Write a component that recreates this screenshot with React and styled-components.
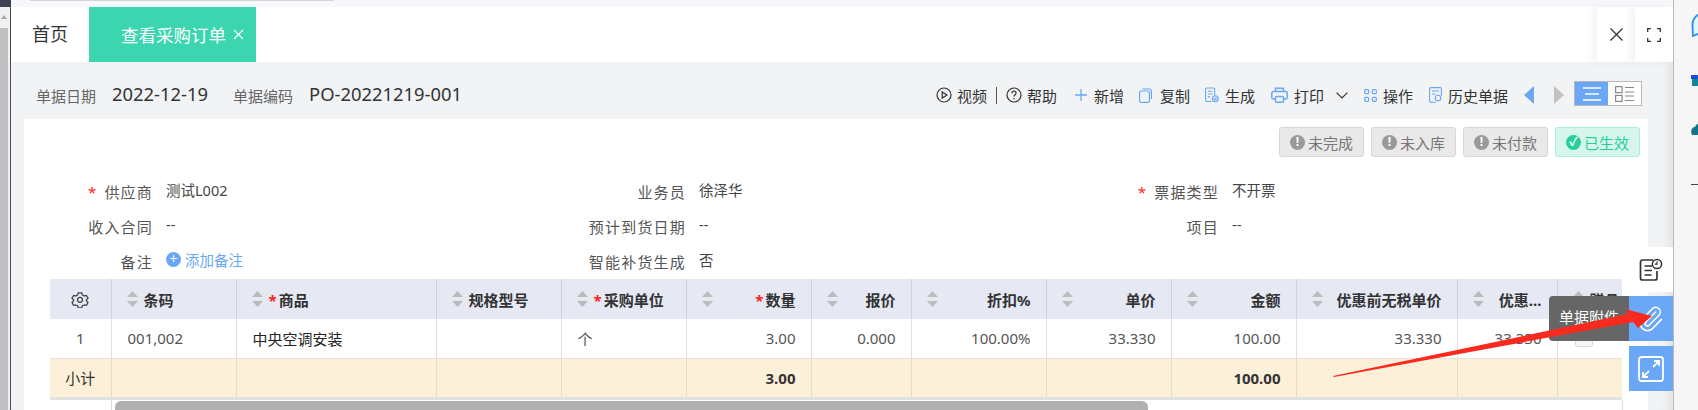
import React from "react";
import styled, { createGlobalStyle } from "styled-components";

const FONT = `"Noto Sans", "Noto Sans CJK SC", sans-serif`;
const BLUE = "#6aa7f6";

const columns = [
  { key: "barcode", title: "条码", width: 125, value: "001,002" },
  { key: "goods", title: "商品", width: 200, required: true, value: "中央空调安装", dark: true },
  { key: "spec", title: "规格型号", width: 125 },
  { key: "unit", title: "采购单位", width: 125, required: true, value: "个" },
  { key: "qty", title: "数量", width: 125, required: true, right: true, value: "3.00", total: "3.00" },
  { key: "quote", title: "报价", width: 100, right: true, value: "0.000" },
  { key: "discount", title: "折扣%", width: 135, right: true, value: "100.00%" },
  { key: "price", title: "单价", width: 125, right: true, value: "33.330" },
  { key: "amount", title: "金额", width: 125, right: true, value: "100.00", total: "100.00" },
  { key: "pre", title: "优惠前无税单价", width: 161, right: true, value: "33.330" },
  { key: "disc", title: "优惠...", width: 100, right: true, value: "33.330" },
  { key: "gift", title: "赠品", width: 65, check: true },
];

const GlobalStyle = createGlobalStyle`
  html, body { margin: 0; padding: 0; background: #fff; }
  * { box-sizing: border-box; }
  svg { flex-shrink: 0; }
`;

function PlayIcon() {
  return (
    <svg width="16" height="16" viewBox="0 0 16 16" fill="none" stroke="#333" strokeWidth="1.2">
      <circle cx="8" cy="8" r="7" />
      <path d="M6.2 4.9 11 8l-4.8 3.1z" />
    </svg>
  );
}

function HelpIcon() {
  return (
    <svg width="16" height="16" viewBox="0 0 16 16" fill="none" stroke="#333" strokeWidth="1.2">
      <circle cx="8" cy="8" r="7" />
      <path d="M5.9 6.2c0-1.2.9-2 2.1-2s2.1.8 2.1 1.9c0 1.6-2.1 1.7-2.1 3.4" />
      <path d="M8 11v1.2" />
    </svg>
  );
}

function PlusIcon() {
  return (
    <svg width="12" height="12" viewBox="0 0 12 12" stroke={BLUE} strokeWidth="1.3">
      <path d="M6 0v12M0 6h12" />
    </svg>
  );
}

function CopyIcon() {
  return (
    <svg width="13" height="15" viewBox="0 0 13 15" fill="none" stroke={BLUE} strokeWidth="1.2">
      <rect x="0.6" y="3" width="9.8" height="11.4" rx="1.6" />
      <path d="M3.2 1h7.2a2 2 0 0 1 2 2v8" />
    </svg>
  );
}

function MakeIcon() {
  return (
    <svg width="14" height="16" viewBox="0 0 15 16" fill="none" stroke={BLUE} strokeWidth="1.1">
      <path d="M7 15H2a1.4 1.4 0 0 1-1.4-1.4V2A1.4 1.4 0 0 1 2 .6h7A1.4 1.4 0 0 1 10.4 2v6" />
      <path d="M3 4h5M3 7h5M3 10h2.500" />
      <circle cx="11" cy="12" r="3.200" fill="#cfe1fb" />
      <path d="m9.600 12 1 1 1.800-1.900" />
    </svg>
  );
}

function PrintIcon() {
  return (
    <svg width="17" height="16" viewBox="0 0 17 16" fill="none" stroke={BLUE} strokeWidth="1.5">
      <path d="M4.500 4.500V1.200h8v3.300" />
      <path d="M4 12H2.400A1.600 1.600 0 0 1 .8 10.400V6.200a1.600 1.600 0 0 1 1.600-1.600h12.200a1.600 1.600 0 0 1 1.600 1.600v4.200a1.600 1.600 0 0 1-1.600 1.600H13" />
      <rect x="4.500" y="9.500" width="8" height="5.700" rx="1" />
    </svg>
  );
}

function ChevronIcon() {
  return (
    <svg width="12" height="7" viewBox="0 0 12 7" fill="none" stroke="#333" strokeWidth="1.2">
      <path d="m.6.6 5.400 5.400 5.400-5.400" />
    </svg>
  );
}

function GridIcon() {
  return (
    <svg width="13" height="13" viewBox="0 0 13 13" fill="none" stroke={BLUE} strokeWidth="1.200">
      <rect x="0.700" y="0.700" width="4" height="4" rx="1" />
      <rect x="8.300" y="0.700" width="4" height="4" rx="1" />
      <rect x="0.700" y="8.300" width="4" height="4" rx="1" />
      <rect x="8.300" y="8.300" width="4" height="4" rx="1" />
    </svg>
  );
}

function HistoryIcon() {
  return (
    <svg width="13" height="16" viewBox="0 0 13 16" fill="none" stroke={BLUE} strokeWidth="1.100">
      <path d="M7 15.300H1.800A1.200 1.200 0 0 1 .6 14.100V1.800A1.200 1.200 0 0 1 1.800.6h9.400a1.200 1.200 0 0 1 1.200 1.200v7" />
      <path d="M3 4h7M3 7h3.500" />
      <circle cx="9" cy="11" r="2.800" />
    </svg>
  );
}

function GearIcon() {
  return (
    <svg width="18" height="17" viewBox="0 0 24 24" fill="none" stroke="#444" strokeWidth="1.800">
      <path d="M9.500 2.500h5l.8 3 2.700 1.500 3-.8 2.300 4-2.200 2.300v1.500l2.200 2.300-2.300 4-3-.8-2.700 1.500-.8 3h-5l-.8-3-2.700-1.500-3 .8-2.300-4 2.200-2.300v-1.500l-2.200-2.300 2.300-4 3 .8 2.700-1.500z" />
      <circle cx="12" cy="12.500" r="3.500" />
    </svg>
  );
}

function SortIcon() {
  return (
    <svg width="11" height="16" viewBox="0 0 11 16" fill="#bcbcbc">
      <path d="M5.500 0 11 6H0zM5.500 16 0 10h11z" />
    </svg>
  );
}

function Logbook() {
  return (
    <svg width="24" height="24" viewBox="0 0 24 24" fill="none" stroke="#333" strokeWidth="1.700">
      <path d="M14 2H3.500A2 2 0 0 0 1.500 4v16a2 2 0 0 0 2 2H16a2 2 0 0 0 2-2v-7" />
      <path d="M5.500 8H13M5.500 12.500H13M5.500 17h7" />
      <circle cx="18" cy="6" r="4.600" fill="#fff" strokeWidth="1.500" />
      <path d="M18 3.600V6.200h-2.200" strokeWidth="1.200" />
    </svg>
  );
}

function PaperclipIcon() {
  return (
    <svg width="28" height="28" viewBox="0 0 24 24" fill="none" stroke="#fff" strokeWidth="1.350" strokeLinecap="round" strokeLinejoin="round">
      <path d="M13.234 20.252 21 12.300" />
      <path d="m16 6-8.414 8.586a2 2 0 0 0 0 2.828 2 2 0 0 0 2.828 0l8.414-8.586a4 4 0 0 0 0-5.656 4 4 0 0 0-5.656 0l-8.415 8.585a6 6 0 1 0 8.486 8.486" />
    </svg>
  );
}

function ExpandIcon() {
  return (
    <svg width="26" height="26" viewBox="0 0 26 26" fill="none" stroke="#fff" strokeWidth="1.800">
      <rect x="1" y="1" width="24" height="24" rx="2.500" />
      <path d="M15 11 21 5M16 5h5v5M11 15l-6 6M5 16v5h5" />
    </svg>
  );
}

const Page = styled.div`
  display: flex;
  width: 1698px;
  height: 410px;
  overflow: hidden;
  font-family: ${FONT};
  color: #333;
`;

const LeftRail = styled.div`
  flex: 0 0 11px;
  display: flex;
  flex-direction: column;
  background: #f0f0f0;
  border-right: 1px solid #454a60;
`;

const RailCap = styled.div`
  height: 7px;
  margin-right: -1px;
  background: #3d4152;
`;

const RailArrow = styled.div`
  height: 21px;
  padding: 8px 0 0 1px;
  &::before {
    content: "";
    display: block;
    width: 0;
    height: 0;
    border: 3px solid transparent;
    border-top: 0;
    border-bottom: 4px solid #a8a8a8;
  }
`;

const RailThumb = styled.div`
  flex: 1;
  width: 8px;
  background: #c0c0c0;
`;

const Main = styled.main`
  position: relative;
  flex: 1;
  min-width: 0;
  display: flex;
  flex-direction: column;
  background: #f2f3f5;
  box-shadow: inset -10px 0 12px -8px rgba(0, 0, 0, 0.1);
`;

const TopStrip = styled.div`
  height: 7px;
  background: #f7f8fc;
  padding-left: 19px;
  &::before {
    content: "";
    display: block;
    width: 304px;
    height: 1px;
    background: #d4d4d4;
  }
`;

const TabBar = styled.div`
  display: flex;
  height: 55px;
  background: #fff;
`;

const HomeTab = styled.div`
  width: 78px;
  padding-left: 21px;
  font-size: 18px;
  line-height: 55px;
  color: #333;
`;

const ActiveTab = styled.div`
  display: flex;
  align-items: center;
  justify-content: flex-end;
  width: 167px;
  padding-right: 12px;
  gap: 7px;
  background: #3bd6b0;
  color: #fff;
  font-size: 17.500px;
`;

const TabCloseIcon = () => (
  <svg width="11" height="11" viewBox="0 0 11 11" stroke="#fff" strokeWidth="1.100">
    <path d="m1 1 9 9M10 1l-9 9" />
  </svg>
);

const TabControl = styled.div`
  display: flex;
  align-items: center;
  justify-content: center;
  width: 38px;
  background: #fff;
  box-shadow: -5px 0 7px rgba(0, 0, 0, 0.05);
  margin-left: ${(p) => (p.$first ? "auto" : "0")};
`;

const Toolbar = styled.div`
  display: flex;
  align-items: center;
  justify-content: space-between;
  height: 57px;
  padding: 9px 31px 0 25px;
`;

const DocInfo = styled.div`
  display: flex;
  align-items: center;
`;

const InfoLabel = styled.span`
  font-size: 15px;
  color: #666;
  margin-right: 16px;
`;

const InfoValue = styled.span`
  font-size: 18.400px;
  color: #333;
  margin-right: 25px;
  position: relative;
  top: -2px;
`;

const ToolGroup = styled.div`
  display: flex;
  align-items: center;
  gap: 16px;
`;

const Tool = styled.div`
  display: flex;
  align-items: center;
  gap: ${(p) => p.$gap || 6}px;
  margin-right: ${(p) => p.$tail || 0}px;
  font-size: 15px;
  color: #333;
  white-space: nowrap;
`;

const HelpGroup = styled(ToolGroup)`
  gap: 9px;
  margin-right: 2px;
`;

const Separator = styled.span`
  width: 1px;
  height: 17px;
  background: #555;
`;

const ChevronSlot = styled.span`
  display: flex;
  margin-left: 6px;
`;

const Triangle = styled.span`
  width: 0;
  height: 0;
  border-top: 9px solid transparent;
  border-bottom: 9px solid transparent;
  ${(p) =>
    p.$left ? `border-right: 10px solid ${BLUE};` : "border-left: 10px solid #c2c2c2; margin-left: 4px;"}
`;

const ViewToggle = styled.div`
  display: flex;
  width: 68px;
  height: 25px;
  margin: -3px 0 0 -6px;
  border: 1px solid #b8b8b8;
  background: #fff;
`;

const ToggleSide = styled.div`
  flex: 1;
  display: flex;
  align-items: center;
  justify-content: center;
  background: ${(p) => (p.$active ? BLUE : "#fff")};
`;

const Card = styled.section`
  flex: 1;
  min-height: 0;
  margin: 0 25px 0 13px;
  background: #fff;
`;

const StatusRow = styled.div`
  display: flex;
  justify-content: flex-end;
  gap: 7px;
  padding: 8px 8px 0 0;
`;

const StatusBadge = styled.div`
  display: flex;
  align-items: center;
  justify-content: center;
  gap: 3px;
  width: 85px;
  height: 30px;
  border-radius: 3px;
  border: 1px solid ${(p) => (p.$done ? "#a9eed6" : "#d6d6d6")};
  background: ${(p) => (p.$done ? "#d6f6ec" : "#e9e9e9")};
  color: ${(p) => (p.$done ? "#27cf9f" : "#777")};
  font-size: 15px;
`;

const StatusDot = styled.span`
  display: flex;
  align-items: center;
  justify-content: center;
  width: 15px;
  height: 15px;
  border-radius: 50%;
  background: ${(p) => (p.$done ? "#27cf9f" : "#999")};
  color: #fff;
  font-size: 12px;
  font-weight: 700;
  line-height: 1;
`;

const FormGrid = styled.div`
  display: grid;
  grid-template-columns: 533px 533px 1fr;
  grid-auto-rows: 35px;
  padding-top: 17px;
`;

const Field = styled.div`
  display: grid;
  grid-template-columns: 129px 1fr;
  column-gap: 13px;
  align-items: center;
`;

const FieldLabel = styled.div`
  text-align: right;
  font-size: 15px;
  letter-spacing: 1.200px;
  color: #555;
  white-space: nowrap;
`;

const Star = styled.span`
  color: #f22;
  margin-right: 7px;
`;

const FieldValue = styled.div`
  display: flex;
  align-items: center;
  gap: 4px;
  font-size: 14.500px;
  padding-bottom: 5px;
  color: ${(p) => (p.$link ? BLUE : "#444")};
`;

const AddDot = styled.span`
  display: flex;
  align-items: center;
  justify-content: center;
  width: 15px;
  height: 15px;
  border-radius: 50%;
  background: ${BLUE};
  color: #fff;
  font-size: 14px;
  line-height: 1;
`;

const TableWrap = styled.div`
  width: 1572px;
  margin: 0 0 0 26px;
`;

const Table = styled.table`
  width: 1572px;
  table-layout: fixed;
  border-collapse: collapse;
  border-bottom: 3px solid #e2e2e2;
`;

const HeadCell = styled.th`
  height: 40px;
  padding: 0 ${(p) => (p.$icon ? 0 : "15px")};
  background: #e6e9f4;
  border-right: 1px solid #cfd2d9;
  font-size: 15px;
  font-weight: 700;
  color: #333;
  overflow: hidden;
  &:last-child {
    border-right: 0;
  }
`;

const HeadInner = styled.div`
  display: flex;
  align-items: center;
  justify-content: ${(p) => (p.$right ? "space-between" : "flex-start")};
  gap: 6px;
  white-space: nowrap;
`;

const GearBox = styled.div`
  display: flex;
  justify-content: center;
`;

const Required = styled.span`
  color: #f22;
  margin-right: 2px;
`;

const Cell = styled.td`
  height: 39px;
  padding: 0 ${(p) => (p.$center ? "0" : p.$right ? "15px" : "16px")};
  border-right: 1px solid #e0e0e0;
  border-bottom: 1px solid #e6e3dc;
  font-size: 15px;
  white-space: nowrap;
  text-align: ${(p) => (p.$center ? "center" : p.$right ? "right" : "left")};
  color: ${(p) => (p.$dark ? "#222" : "#555")};
  &:last-child {
    border-right: 0;
  }
`;

const TotalCell = styled(Cell)`
  height: 40px;
  background: #fdf0d9;
  color: #333;
  font-weight: ${(p) => (p.$center ? 400 : 700)};
  border-bottom: 0;
  border-right-color: #e2ded4;
`;

const CheckBox = styled.div`
  width: 18px;
  height: 18px;
  margin-left: 1px;
  border: 1px solid #d4d7e2;
  border-radius: 3px;
  background: #f4f5fa;
`;

const ScrollTrack = styled.div`
  height: 12px;
  margin: 0 -1px 0 61px;
  padding: 1px 0 0 3px;
  border-left: 1px solid #ddd;
  border-right: 1px solid #ddd;
`;

const ScrollThumb = styled.div`
  width: 1033px;
  height: 10px;
  border-radius: 6px 6px 0 0;
  background: #b0b0b0;
`;

const Dock = styled.div`
  position: absolute;
  right: 0;
  top: 247px;
  display: flex;
  flex-direction: column;
  width: 44px;
  gap: 5px;
`;

const DockButton = styled.button`
  position: relative;
  display: flex;
  align-items: center;
  justify-content: center;
  width: 44px;
  height: 45px;
  padding: 0;
  border: 0;
  text-align: left;
  background: ${(p) => (p.$primary ? BLUE : "#fff")};
  margin-top: ${(p) => (p.$tight ? "-1px" : "0")};
`;

const DockTip = styled.div`
  position: absolute;
  right: 100%;
  top: 0;
  width: 80px;
  height: 45px;
  padding-left: 10px;
  border-radius: 4px 0 0 4px;
  background: #666;
  color: #fff;
  font-family: ${FONT};
  font-size: 15px;
  line-height: 43px;
  white-space: nowrap;
`;

const MarkArrow = styled.svg`
  position: absolute;
  left: 1322px;
  top: 305px;
`;

const RightRail = styled.aside`
  flex: 0 0 25px;
  display: flex;
  flex-direction: column;
  overflow: hidden;
  padding: 13px 0 0 17px;
  background: #f6f6f6;
  border-left: 1px solid #bbb;
`;

const RailItem = styled.div`
  height: ${(p) => p.$h}px;
  flex-shrink: 0;
  display: flex;
`;

const ToggleBars = ({ color }) => (
  <svg width="18" height="14" viewBox="0 0 18 14" stroke={color} strokeWidth="1.500">
    <path d="M0 1h18M2 7h14M0 13h18" />
  </svg>
);

const ToggleList = () => (
  <svg width="19" height="16" viewBox="0 0 19 16" fill="none" stroke="#888" strokeWidth="1.200">
    <rect x="0.600" y="0.600" width="6.500" height="6" />
    <rect x="0.600" y="9.400" width="6.500" height="6" />
    <path d="M10 1.500h9M10 6h9M10 10h9M10 14.500h9" />
  </svg>
);

const tools = [
  { icon: <PlusIcon />, label: "新增", gap: 7, tail: -1 },
  { icon: <CopyIcon />, label: "复制", gap: 8, tail: -1 },
  { icon: <MakeIcon />, label: "生成" },
];

const formFields = [
  { label: "供应商", required: true, value: "测试L002" },
  { label: "业务员", value: "徐泽华" },
  { label: "票据类型", required: true, value: "不开票" },
  { label: "收入合同", value: "--" },
  { label: "预计到货日期", value: "--" },
  { label: "项目", value: "--" },
  { label: "备注", link: true, value: "添加备注" },
  { label: "智能补货生成", value: "否" },
];

const statuses = ["未完成", "未入库", "未付款"];

const App = () => {
  return (
    <Page>
      <GlobalStyle />
      <LeftRail>
        <RailCap />
        <RailArrow />
        <RailThumb />
      </LeftRail>
      <Main>
        <TopStrip />
        <TabBar>
          <HomeTab>首页</HomeTab>
          <ActiveTab>
            查看采购订单
            <TabCloseIcon />
          </ActiveTab>
          <TabControl $first>
            <svg width="13" height="13" viewBox="0 0 13 13" stroke="#333" strokeWidth="1.300">
              <path d="m.5.500 12 12M12.500.5l-12 12" />
            </svg>
          </TabControl>
          <TabControl>
            <svg width="14" height="14" viewBox="0 0 14 14" fill="none" stroke="#333" strokeWidth="1.300">
              <path d="M.7 4V.7H4M10 .7h3.300V4M13.300 10v3.300H10M4 13.300H.7V10" />
            </svg>
          </TabControl>
        </TabBar>
        <Toolbar>
          <DocInfo>
            <InfoLabel>单据日期</InfoLabel>
            <InfoValue>2022-12-19</InfoValue>
            <InfoLabel>单据编码</InfoLabel>
            <InfoValue>PO-20221219-001</InfoValue>
          </DocInfo>
          <ToolGroup>
            <HelpGroup>
              <Tool $gap={5}>
                <PlayIcon />
                视频
              </Tool>
              <Separator />
              <Tool $gap={5}>
                <HelpIcon />
                帮助
              </Tool>
            </HelpGroup>
            {tools.map((tool) => (
              <Tool key={tool.label} $gap={tool.gap} $tail={tool.tail}>
                {tool.icon}
                {tool.label}
              </Tool>
            ))}
            <Tool>
              <PrintIcon />
              打印
              <ChevronSlot>
                <ChevronIcon />
              </ChevronSlot>
            </Tool>
            <Tool>
              <GridIcon />
              操作
            </Tool>
            <Tool>
              <HistoryIcon />
              历史单据
            </Tool>
            <Triangle $left />
            <Triangle />
            <ViewToggle>
              <ToggleSide $active>
                <ToggleBars color="#fff" />
              </ToggleSide>
              <ToggleSide>
                <ToggleList />
              </ToggleSide>
            </ViewToggle>
          </ToolGroup>
        </Toolbar>
        <Card>
          <StatusRow>
            {statuses.map((s) => (
              <StatusBadge key={s}>
                <StatusDot>!</StatusDot>
                {s}
              </StatusBadge>
            ))}
            <StatusBadge $done>
              <StatusDot $done>✓</StatusDot>
              已生效
            </StatusBadge>
          </StatusRow>
          <FormGrid>
            {formFields.map((f) => (
              <Field key={f.label}>
                <FieldLabel>
                  {f.required && <Star>*</Star>}
                  {f.label}
                </FieldLabel>
                <FieldValue $link={f.link}>
                  {f.link && <AddDot>+</AddDot>}
                  {f.value}
                </FieldValue>
              </Field>
            ))}
          </FormGrid>
          <TableWrap>
            <Table>
              <colgroup>
                <col style={{ width: 61 }} />
                {columns.map((c) => (
                  <col key={c.key} style={{ width: c.width }} />
                ))}
              </colgroup>
              <thead>
                <tr>
                  <HeadCell $icon>
                    <GearBox>
                      <GearIcon />
                    </GearBox>
                  </HeadCell>
                  {columns.map((c) => (
                    <HeadCell key={c.key}>
                      <HeadInner $right={c.right}>
                        <SortIcon />
                        <span>
                          {c.required && <Required>*</Required>}
                          {c.title}
                        </span>
                      </HeadInner>
                    </HeadCell>
                  ))}
                </tr>
              </thead>
              <tbody>
                <tr>
                  <Cell $center>1</Cell>
                  {columns.map((c) => (
                    <Cell key={c.key} $right={c.right} $dark={c.dark}>
                      {c.check ? <CheckBox /> : c.value}
                    </Cell>
                  ))}
                </tr>
                <tr>
                  <TotalCell $center>小计</TotalCell>
                  {columns.map((c) => (
                    <TotalCell key={c.key} $right={c.right}>
                      {c.total}
                    </TotalCell>
                  ))}
                </tr>
              </tbody>
            </Table>
            <ScrollTrack>
              <ScrollThumb />
            </ScrollTrack>
          </TableWrap>
        </Card>
        <Dock>
          <DockButton>
            <Logbook />
          </DockButton>
          <DockButton $primary $tight>
            <DockTip>单据附件</DockTip>
            <PaperclipIcon />
          </DockButton>
          <DockButton $primary>
            <ExpandIcon />
          </DockButton>
        </Dock>
        <MarkArrow width="320" height="75" viewBox="0 0 320 75">
          <path d="M0 71 295 9l-3-5 27 7-14 12-5-6L1 72z" fill="#fb2a1e" />
        </MarkArrow>
      </Main>
      <RightRail>
        <RailItem $h={59}>
          <svg width="24" height="25" viewBox="0 0 24 25" fill="#dff6fb" stroke="#2a8df0" strokeWidth="1.800">
            <path d="M12 1C5 1 1.500 6 1.500 12c0 4 .5 8 .5 11l5-2h5c6 0 11-4 11-10S18 1 12 1z" />
          </svg>
        </RailItem>
        <RailItem $h={50}>
          <svg width="16" height="14" viewBox="0 0 16 14">
            <rect x="0" y="3" width="16" height="4" fill="#1b4fd8" />
            <rect x="1" y="7" width="14" height="7" fill="#12869a" />
          </svg>
        </RailItem>
        <RailItem $h={62}>
          <svg width="18" height="13" viewBox="0 0 18 13" fill="#12768a">
            <path d="M1 13C-1 9 1 5 4 5c1-3 5-5 9-3 3 2 4 7 4 11z" />
          </svg>
        </RailItem>
        <RailItem $h={4}>
          <svg width="8" height="2" viewBox="0 0 8 2" fill="#444">
            <rect width="8" height="1" />
          </svg>
        </RailItem>
      </RightRail>
    </Page>
  );
};

export default App;
